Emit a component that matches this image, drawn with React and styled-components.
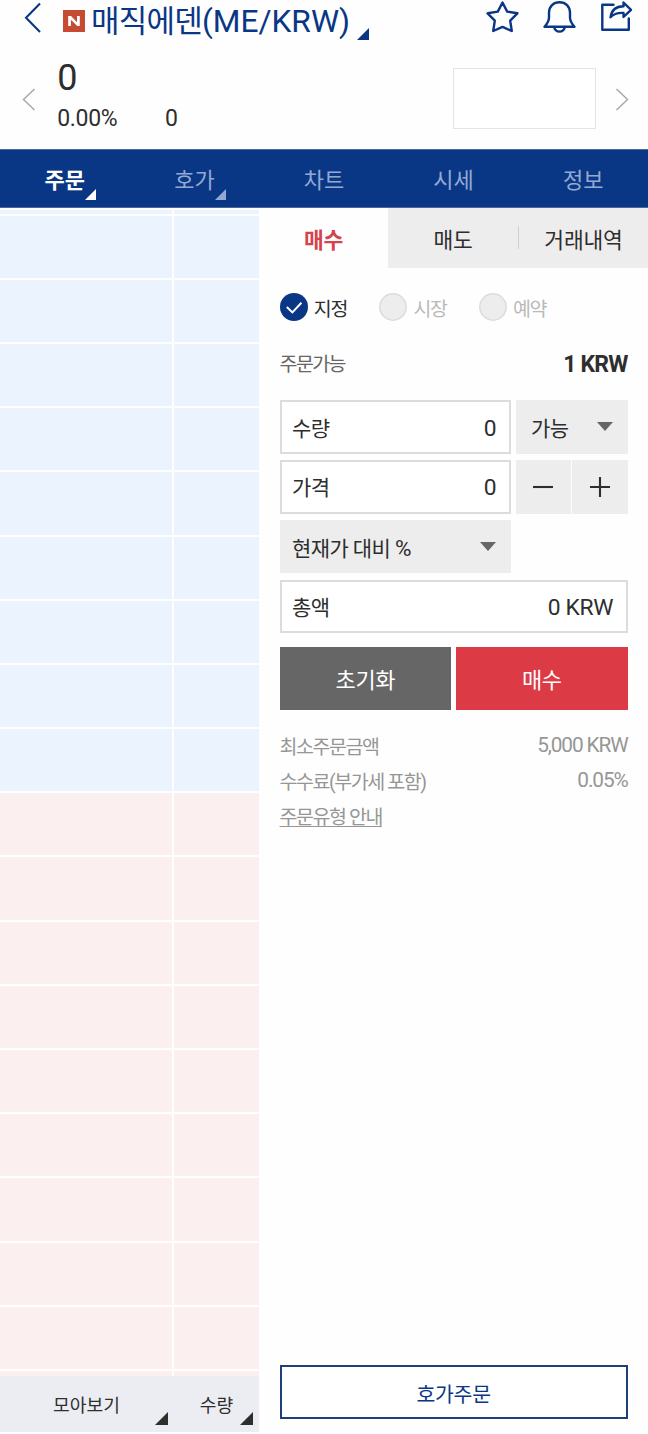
import React from 'react';
import styled, { createGlobalStyle, css } from 'styled-components';

const navy = '#0a3785';
const ink = '#2e2e2e';

const GlobalStyle = createGlobalStyle`
  * { box-sizing: border-box; }
  body {
    margin: 0;
    background: #fefefe;
    color: ${ink};
    font-family: Roboto, 'Noto Sans CJK KR', sans-serif;
    overflow: hidden;
  }
  button {
    font-family: inherit;
    color: inherit;
    border: 0;
    padding: 0;
    margin: 0;
    background: none;
    border-radius: 0;
  }
`;

const Screen = styled.div`
  width: 648px;
  height: 1434px;
  display: flex;
  flex-direction: column;
  overflow: hidden;
`;

const Header = styled.header`
  height: 41px;
  flex: none;
  display: flex;
  align-items: flex-start;
  padding-left: 24px;
  color: ${navy};
`;

const BackIcon = styled.svg`
  width: 18px;
  height: 34px;
  margin-top: 1px;
`;

const Badge = styled.svg`
  width: 22px;
  height: 22px;
  margin: 10px 0 0 21px;
`;

const Title = styled.h1`
  margin: 4px 0 0 6px;
  width: 266px;
  font-size: 31px;
  line-height: 36px;
  font-weight: 400;
  letter-spacing: -0.8px;
  white-space: nowrap;

  span { font-size: 31.7px; letter-spacing: 0; }
`;

const Corner = styled.svg.attrs({ viewBox: '0 0 12 12' })`
  width: ${(p) => p.$size || 12}px;
  height: ${(p) => p.$size || 12}px;
  flex: none;
  fill: currentColor;
`;

const TitleCorner = styled(Corner)`
  margin-top: 28px;
`;

const Actions = styled.div`
  display: flex;
  gap: 22px;
  margin-left: auto;
  padding-right: 14px;
`;

const ActionIcon = styled.svg.attrs({ viewBox: '0 0 35 35' })`
  width: 35px;
  height: 35px;
  fill: none;
  stroke: currentColor;
  stroke-width: 2.4;
  stroke-linejoin: round;
  stroke-linecap: round;
`;

const Summary = styled.section`
  height: 108px;
  flex: none;
  display: flex;
  align-items: flex-start;
  padding: 0 19px 0 22px;
`;

const Arrow = styled.svg`
  width: 14px;
  height: 24px;
  margin-top: 47px;
  fill: none;
  stroke: #a9a9a9;
  stroke-width: 1.5;
`;

const PriceBlock = styled.div`
  flex: 1;
  padding: 17px 0 0 21.2px;
`;

const Price = styled.div`
  font-size: 36px;
  line-height: 40px;
`;

const Change = styled.div`
  display: flex;
  gap: 47.5px;
  margin-top: 7.5px;
  font-size: 23px;
  line-height: 26px;
  letter-spacing: -0.3px;
`;

const MiniChart = styled.div`
  width: 143px;
  height: 61px;
  margin: 27px 19px 0 0;
  border: 1px solid #e4e4e4;
  background: #fff;
`;

const Nav = styled.nav`
  height: 59px;
  flex: none;
  display: flex;
  background: ${navy};
  border-top: 1px solid #4a6797;
  border-bottom: 1px solid #4a6797;
`;

const NavItem = styled.button`
  flex: 1;
  position: relative;
  font-size: 22px;
  line-height: 30px;
  padding-top: 4px;
  font-weight: ${(p) => (p.$active ? 700 : 400)};
  color: ${(p) => (p.$active ? '#fff' : '#93a9d2')};

  ${Corner} {
    position: absolute;
    left: 85px;
    top: 39px;
  }
`;

const Body = styled.main`
  flex: 1;
  min-height: 0;
  display: flex;
`;

const Book = styled.aside`
  width: 259px;
  flex: none;
  display: flex;
  flex-direction: column;
`;

const Ladder = styled.div`
  height: 1168.3px;
  display: grid;
  grid-template-columns: 172px 85px;
  column-gap: 2px;
  grid-template-rows: 7.6px repeat(18, 64.2px) 5.1px;
  overflow: hidden;
`;

const Level = styled.div`
  background: ${(p) => (p.$side === 'ask' ? '#eaf3fe' : '#fbefef')};
  border-bottom: ${(p) => (p.$last ? 0 : '2px solid #fefefe')};
  ${(p) => p.$first && css`border-top: 2px solid #fefefe;`}
`;

const BookFooter = styled.div`
  height: 56px;
  display: grid;
  grid-template-columns: 172px 87px;
  background: #ecedf2;
`;

const FooterButton = styled.button`
  position: relative;
  font-size: 18.2px;
  line-height: 24px;
  padding: 4px 0 0 ${(p) => p.$shift || 0}px;

  ${Corner} {
    position: absolute;
    right: ${(p) => p.$corner}px;
    bottom: 7px;
  }
`;

const OrderPanel = styled.section`
  flex: 1;
  display: flex;
  flex-direction: column;
`;

const Tabs = styled.div`
  height: 60px;
  flex: none;
  display: grid;
  grid-template-columns: 129px 130px 130px;
`;

const Tab = styled.button`
  display: flex;
  align-items: center;
  font-size: 21.5px;
  line-height: 30px;
  padding-top: 6px;
  letter-spacing: -0.2px;
  background: ${(p) => (p.$active ? 'transparent' : '#ededed')};
  color: ${(p) => (p.$active ? '#d6434d' : ink)};
  font-weight: ${(p) => (p.$active ? 700 : 400)};

  span { flex: 1; }

  &:nth-child(3)::before {
    content: '';
    width: 1px;
    height: 23px;
    margin-top: -7px;
    background: #d0d0d0;
  }
`;

const Form = styled.div`
  flex: 1;
  display: flex;
  flex-direction: column;
  padding: 0 20.4px 15px 20.6px;
`;

const Radios = styled.div`
  display: flex;
  margin-top: 25px;
  height: 28px;
`;

const Radio = styled.label`
  width: 99.6px;
  display: flex;
  align-items: center;
  gap: 6.2px;
  font-size: 19.5px;
  line-height: 28px;
  letter-spacing: -1.3px;
  color: ${(p) => (p.$on ? ink : '#b9b9b9')};

  svg { width: 28px; height: 28px; }
  span { padding-top: 5px; }
`;

const Row = styled.div`
  display: flex;
  justify-content: space-between;
  line-height: 35px;
  height: 35px;
  color: #969696;
`;

const Available = styled(Row)`
  margin: 26px 0 18.3px;
  color: #666;
  span { font-size: 19.5px; letter-spacing: -1.6px; }
  strong { color: ${ink}; font-size: 23px; letter-spacing: -0.8px; font-weight: 700; }
`;

const Line = styled.div`
  display: flex;
  gap: 5px;
  margin-bottom: 6.3px;
`;

const boxText = css`
  display: flex;
  align-items: center;
  justify-content: space-between;
  height: 53.5px;
  font-size: 21px;
  line-height: 30px;
  letter-spacing: -0.6px;
`;

const Field = styled.div`
  ${boxText}
  width: ${(p) => p.$width}px;
  padding: 3px 12.3px 0 10.5px;
  border: 2px solid #dcdcdc;
  background: #fff;

  b { font-weight: 400; font-size: 22.8px; letter-spacing: -0.3px; }
`;

const Select = styled.button`
  ${boxText}
  width: ${(p) => p.$width}px;
  padding: 3.4px 15px 0 ${(p) => p.$left}px;
  background: #ededed;

  svg { width: 16px; height: 9px; margin-top: -4px; fill: #666; }
  i { font-style: normal; font-size: 22.5px; }
`;

const Step = styled.button`
  width: 55.5px;
  height: 53.5px;
  background: #ededed;
  display: flex;
  align-items: center;
  justify-content: center;

  svg { width: 20px; height: 20px; stroke: ${ink}; stroke-width: 2.1; }
`;

const Steps = styled.div`
  display: flex;
  gap: 1.5px;
  width: 112px;
`;

const Submit = styled.div`
  display: flex;
  gap: 5px;
  margin-top: 7.7px;
  margin-bottom: 18px;
`;

const SubmitButton = styled.button`
  flex: 1;
  height: 63px;
  padding-top: 4px;
  color: #fff;
  font-size: 22px;
  line-height: 30px;
  letter-spacing: -0.4px;
  background: ${(p) => (p.$buy ? '#dc3b45' : '#666')};
`;

const Fees = styled.div`
  span { font-size: 19.5px; letter-spacing: -1.45px; padding-top: 1.5px; }
  b { font-weight: 400; font-size: 20.8px; letter-spacing: -1.1px; }
`;

const GuideLink = styled.span`
  text-decoration: underline;
  text-decoration-thickness: 1px;
  text-underline-offset: 2px;
`;

const BookOrder = styled.button`
  height: 54px;
  margin-top: auto;
  border: 2px solid #1d4077;
  color: ${navy};
  font-size: 20.5px;
  letter-spacing: -0.3px;
  padding-top: 2px;
  background: #fff;
`;

const Mark = (props) => (
  <Corner {...props}>
    <path d="M12 0V12H0Z" />
  </Corner>
);

const Caret = () => (
  <svg viewBox="0 0 16 9">
    <path d="M0 0H16L8 9Z" />
  </svg>
);

const levels = Array.from({ length: 20 }, (_, i) => (i < 10 ? 'ask' : 'bid'));

export default function App() {
  return (
    <>
      <GlobalStyle />
      <Screen>
        <Header>
          <BackIcon viewBox="0 0 18 34" fill="none" stroke="currentColor" strokeWidth="2.1">
            <path d="M16 2.5L2 16.8L16 31" />
          </BackIcon>
          <Badge viewBox="0 0 22 22">
            <rect width="22" height="22" fill="#c64b33" />
            <path d="M5.2 16V6H8L14 12.2V6H16.8V16H14.2L7.9 9.7V16Z" fill="#fff" />
          </Badge>
          <Title>매직에덴<span>(ME/KRW)</span></Title>
          <TitleCorner>
            <path d="M12 0V12H0Z" />
          </TitleCorner>
          <Actions>
            <ActionIcon>
              <path d="M17.5 2.5L22.2 11.6L32.4 13.3L25.2 20.7L26.8 31L17.5 26.9L8.2 31L9.8 20.7L2.6 13.3L12.8 11.6Z" />
            </ActionIcon>
            <ActionIcon>
              <path d="M2.5 26.8C5 24 7 21.5 7 17.5V12.5C7 6.3 11.5 2.2 17.5 2.2S28 6.3 28 12.5V17.5C28 21.5 30 24 32.5 26.8Z" />
              <path d="M12 27C12.8 30 14.8 31.6 17.5 31.6S22.2 30 23 27" />
            </ActionIcon>
            <ActionIcon>
              <path d="M14.5 4.8H3.3V29.8H29.8V18.5" />
              <path d="M11.5 17.3C12.5 10.5 17 6.2 24.5 6.2V2.5L32 9.8L24.5 17V12.9C18.5 12.5 14.5 14 11.5 17.3Z" />
            </ActionIcon>
          </Actions>
        </Header>

        <Summary>
          <Arrow viewBox="0 0 14 24">
            <path d="M12.5 1L1.5 11.5L12.5 22" />
          </Arrow>
          <PriceBlock>
            <Price>0</Price>
            <Change>
              <span>0.00%</span>
              <span>0</span>
            </Change>
          </PriceBlock>
          <MiniChart />
          <Arrow viewBox="0 0 14 24">
            <path d="M1.5 1L12.5 11.5L1.5 22" />
          </Arrow>
        </Summary>

        <Nav>
          <NavItem $active>주문<Mark $size={11} /></NavItem>
          <NavItem>호가<Mark $size={11} /></NavItem>
          <NavItem>차트</NavItem>
          <NavItem>시세</NavItem>
          <NavItem>정보</NavItem>
        </Nav>

        <Body>
          <Book>
            <Ladder>
              {levels.map((side, i) => (
                <React.Fragment key={i}>
                  <Level $side={side} $first={i === 0} $last={i === levels.length - 1} />
                  <Level $side={side} $first={i === 0} $last={i === levels.length - 1} />
                </React.Fragment>
              ))}
            </Ladder>
            <BookFooter>
              <FooterButton $corner={4} $shift={1}>모아보기<Mark $size={13} /></FooterButton>
              <FooterButton $corner={6} $shift={2}>수량<Mark $size={13} /></FooterButton>
            </BookFooter>
          </Book>

          <OrderPanel>
            <Tabs>
              <Tab $active><span>매수</span></Tab>
              <Tab><span>매도</span></Tab>
              <Tab><span>거래내역</span></Tab>
            </Tabs>
            <Form>
              <Radios>
                <Radio $on>
                  <svg viewBox="0 0 28 28">
                    <circle cx="14" cy="14" r="14" fill={navy} />
                    <path d="M6.8 14L12.4 19.4L21.4 9.8" fill="none" stroke="#fff" strokeWidth="2" />
                  </svg>
                  <span>지정</span>
                </Radio>
                {['시장', '예약'].map((name) => (
                  <Radio key={name}>
                    <svg viewBox="0 0 28 28">
                      <circle cx="14" cy="14" r="13.2" fill="#ededed" stroke="#dcdcdc" strokeWidth="1.5" />
                    </svg>
                    <span>{name}</span>
                  </Radio>
                ))}
              </Radios>
              <Available>
                <span>주문가능</span>
                <strong>1 KRW</strong>
              </Available>

              <Line>
                <Field $width={231}>수량<b>0</b></Field>
                <Select $width={112} $left={15.5}>가능<Caret /></Select>
              </Line>
              <Line>
                <Field $width={231}>가격<b>0</b></Field>
                <Steps>
                  <Step>
                    <svg viewBox="0 0 20 20"><path d="M0 10H20" /></svg>
                  </Step>
                  <Step>
                    <svg viewBox="0 0 20 20"><path d="M0 10H20M10 0V20" /></svg>
                  </Step>
                </Steps>
              </Line>
              <Line>
                <Select $width={231} $left={12.5}>
                  <span>현재가 대비 <i>%</i></span>
                  <Caret />
                </Select>
              </Line>
              <Line>
                <Field $width={348}>총액<b>0 KRW</b></Field>
              </Line>

              <Submit>
                <SubmitButton>초기화</SubmitButton>
                <SubmitButton $buy>매수</SubmitButton>
              </Submit>

              <Fees>
                <Row><span>최소주문금액</span><b>5,000 KRW</b></Row>
                <Row><span>수수료(부가세 포함)</span><b>0.05%</b></Row>
                <Row><GuideLink>주문유형 안내</GuideLink></Row>
              </Fees>

              <BookOrder>호가주문</BookOrder>
            </Form>
          </OrderPanel>
        </Body>
      </Screen>
    </>
  );
}
